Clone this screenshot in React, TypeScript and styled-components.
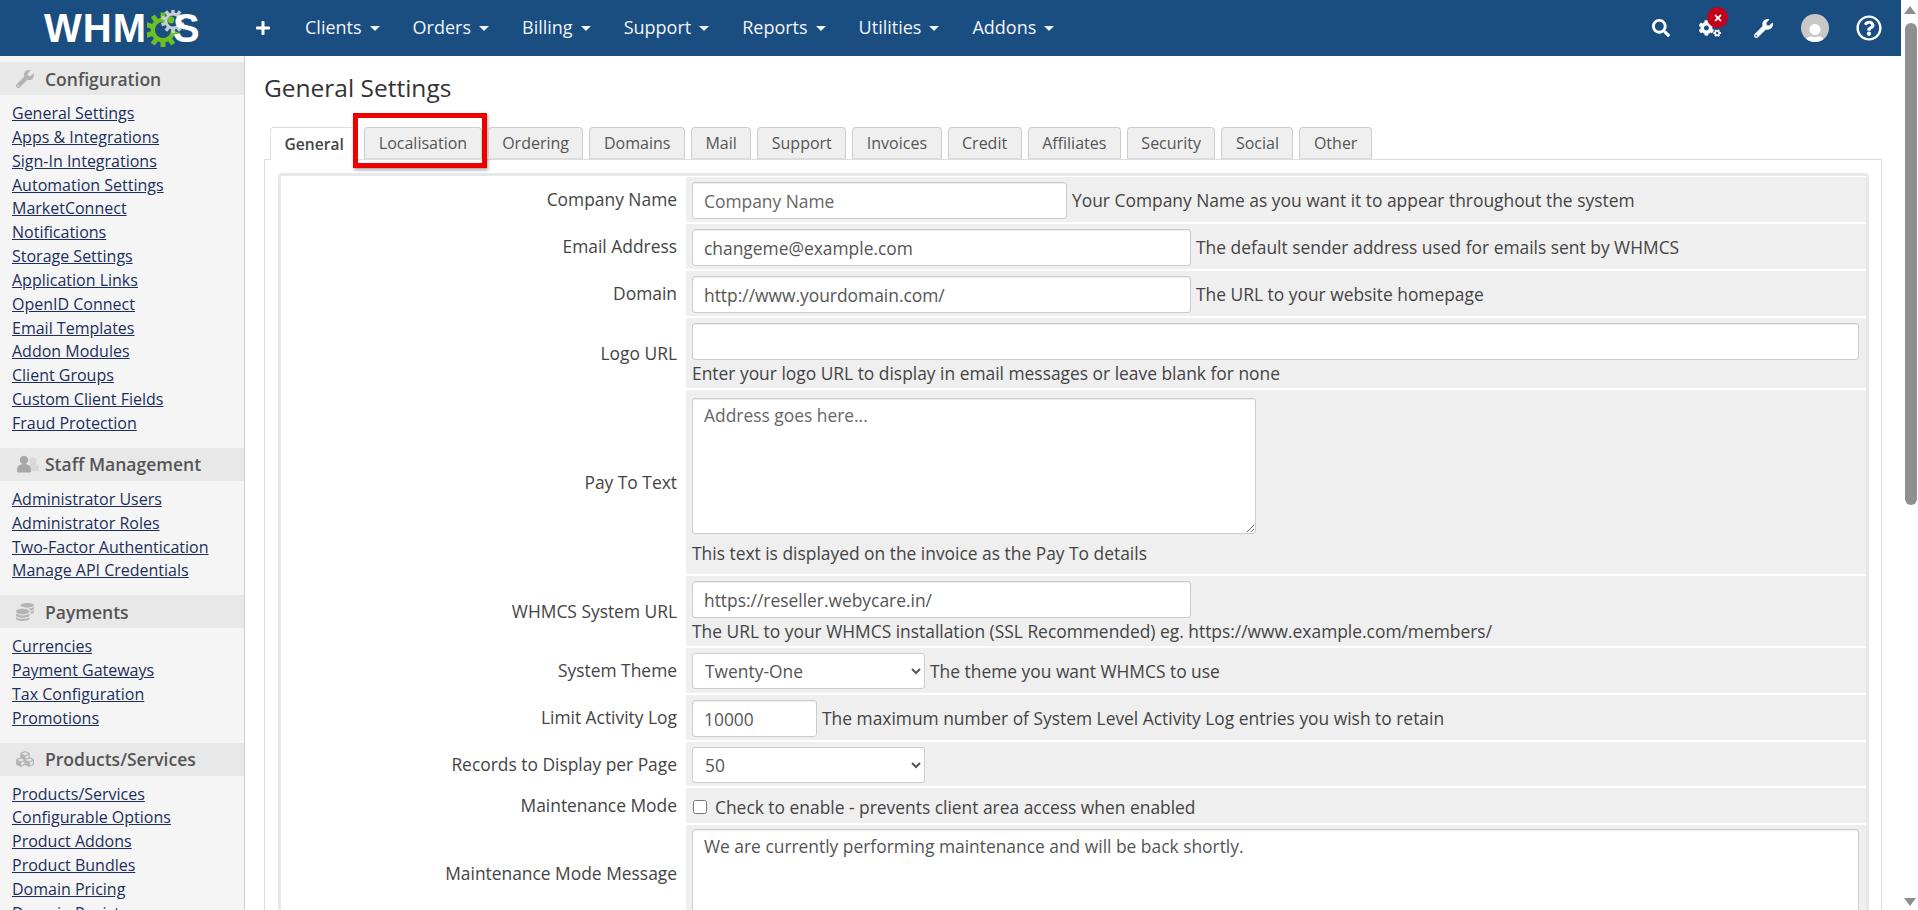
import React from 'react'
import styled, { createGlobalStyle } from 'styled-components'
import { FaSearch, FaCogs, FaWrench, FaTimes, FaRegQuestionCircle, FaCoins, FaCubes, FaPlus, FaUser } from 'react-icons/fa'

const GlobalStyle = createGlobalStyle`
  html, body {
    margin: 0;
    padding: 0;
    height: 100%;
    overflow: hidden;
    background: #fff;
  }
  body {
    font-family: "Open Sans", "Noto Sans", sans-serif;
    font-size: 16px;
    color: #333;
  }
  * {
    box-sizing: border-box;
  }
`

const Page = styled.div`
  display: flex;
  height: 910px;
  overflow: hidden;
`

const Content = styled.div`
  flex: 1;
  display: flex;
  flex-direction: column;
  min-width: 0;
`

const Nav = styled.nav`
  height: 56px;
  flex: none;
  display: flex;
  align-items: center;
  background: #1a4d80;
  color: #fff;
  padding-left: 44px;
`

const Logo = styled.div`
  display: flex;
  align-items: center;
  width: 156px;
  height: 56px;
  font-family: "Liberation Sans", sans-serif;
  font-weight: 700;
  font-size: 40px;
  letter-spacing: 1px;
  color: #fff;
`

const LogoGear = styled.svg`
  width: 37px;
  height: 37px;
  flex: none;
  margin: 0 -11px 0 0;
`

const NewButton = styled.a`
  display: flex;
  align-items: center;
  margin-left: 55px;
  margin-right: 34px;
  font-size: 16px;
  color: #fff;
`

const NavItem = styled.a`
  display: flex;
  align-items: center;
  margin-right: 33px;
  margin-top: -2px;
  font-size: 18px;
  color: #f1f4f8;

  &::after {
    content: '';
    margin-left: 8px;
    margin-top: 3px;
    border-top: 5px solid #f1f4f8;
    border-left: 5px solid transparent;
    border-right: 5px solid transparent;
  }
`

const NavIcons = styled.div`
  margin-left: auto;
  padding-right: 6px;
  display: flex;
  align-items: center;
`

const NavIcon = styled.a<{ $width: number }>`
  position: relative;
  display: flex;
  justify-content: center;
  align-items: center;
  width: ${({ $width }) => $width}px;
  height: 56px;
  color: #fff;
`

const AlertBadge = styled.span`
  position: absolute;
  top: 7px;
  left: 26px;
  width: 21px;
  height: 21px;
  border-radius: 50%;
  background: #c4001a;
  display: flex;
  align-items: center;
  justify-content: center;
  color: #fff;
  font-size: 10px;
`

const Avatar = styled.span`
  width: 28px;
  height: 28px;
  border-radius: 50%;
  overflow: hidden;
  background: #c8c8c8;
  display: flex;
  align-items: flex-end;
  justify-content: center;
  color: #fff;
  font-size: 22px;

  svg {
    margin-bottom: -4px;
  }
`

const Body = styled.div`
  flex: 1;
  display: flex;
  min-height: 0;
`

const Sidebar = styled.aside`
  width: 245px;
  flex: none;
  padding-top: 6px;
  background: #f5f5f5;
  border-right: 1px solid #ccc;
  overflow: hidden;
`

const SideSection = styled.section`
  margin-bottom: 12px;
`

const SideHeader = styled.h3`
  display: flex;
  align-items: center;
  height: 33px;
  margin: 0 0 7px;
  padding-left: 16px;
  background: #e8e8e8;
  color: #555;
  font-size: 17.5px;
  font-weight: 600;
`

const SideIcon = styled.span`
  width: 29px;
  flex: none;
  display: flex;
  align-items: center;
  color: #b4b4b4;
  font-size: 18px;
`

const SideLink = styled.a`
  display: block;
  height: 23.85px;
  line-height: 23.85px;
  padding-left: 12px;
  font-size: 16px;
  color: #1c2f5c;
  text-decoration: underline;
  white-space: nowrap;
`

const Main = styled.main`
  flex: 1;
  min-width: 0;
  padding: 0 19px 0 19px;
  overflow: hidden;
`

const Title = styled.h1`
  margin: 0;
  height: 71px;
  padding-top: 14px;
  font-size: 24.5px;
  line-height: 36px;
  font-weight: 400;
  color: #333;
`

const Tabs = styled.div`
  display: flex;
  gap: 6px;
  padding-left: 6px;
  height: 32px;
`

const Tab = styled.a<{ $active?: boolean }>`
  position: relative;
  display: flex;
  align-items: center;
  height: ${({ $active }) => ($active ? 33 : 32)}px;
  padding: 0 13.5px;
  font-size: ${({ $active }) => ($active ? 15.6 : 16)}px;
  color: ${({ $active }) => ($active ? '#444' : '#555')};
  font-weight: ${({ $active }) => ($active ? 600 : 400)};
  background: ${({ $active }) => ($active ? '#fff' : '#efefef')};
  border: 1px solid ${({ $active }) => ($active ? '#ddd' : '#ccc')};
  border-bottom: ${({ $active }) => ($active ? 'none' : '1px solid #ddd')};
  border-radius: 4px 4px 0 0;
  z-index: 1;
`

const Highlight = styled.span`
  position: absolute;
  top: -15px;
  bottom: -10px;
  left: -12px;
  right: -6px;
  border: 5px solid #ee0000;
  box-shadow: 1px 2px 3px rgba(0, 0, 0, 0.35);
  pointer-events: none;
  z-index: 2;
`

const Pane = styled.div`
  margin-top: 0;
  padding: 13px 12px 0 13px;
  border: 1px solid #ddd;
  border-bottom: none;
  height: 760px;
`

const FormBox = styled.div`
  display: flex;
  flex-direction: column;
  gap: 2px;
  border: 3px solid #e6e9ec;
  border-bottom: none;
  border-radius: 4px 4px 0 0;
  padding-top: 1px;
  height: 760px;
`

const Row = styled.div`
  display: grid;
  grid-template-columns: 405px 1fr;
  flex: none;
`

const Label = styled.label`
  display: flex;
  align-items: center;
  justify-content: flex-end;
  padding-right: 9px;
  padding-bottom: 1px;
  font-size: 17.4px;
  color: #444;
`

const Field = styled.div<{ $top?: number }>`
  display: flex;
  align-items: flex-start;
  flex-wrap: wrap;
  column-gap: 5px;
  padding: ${({ $top }) => $top ?? 5}px 7px 3px 6px;
  background: #efefef;
  font-size: 17.4px;
  color: #444;
`

const TextInput = styled.input<{ $width: string }>`
  width: ${({ $width }) => $width};
  height: 37px;
  padding: 0 11px;
  background: #fff;
  border: 1px solid #ccc;
  border-radius: 3px;
  box-shadow: inset 0 1px 1px rgba(0, 0, 0, 0.075);
  font: inherit;
  color: #555;
  outline: none;

  &::placeholder {
    color: #666;
    opacity: 1;
  }
`

const TextArea = styled.textarea<{ $width: string; $height: number }>`
  display: block;
  width: ${({ $width }) => $width};
  height: ${({ $height }) => $height}px;
  padding: 4px 11px;
  background: #fff;
  border: 1px solid #ccc;
  border-radius: 3px;
  box-shadow: inset 0 1px 1px rgba(0, 0, 0, 0.075);
  font: inherit;
  line-height: 1.43;
  color: #555;
  outline: none;

  &::placeholder {
    color: #666;
    opacity: 1;
  }
`

const SelectInput = styled.select`
  width: 233px;
  height: 36px;
  padding: 0 8px;
  background: #fff;
  border: 1px solid #ccc;
  border-radius: 3px;
  font: inherit;
  color: #555;
  outline: none;
`

const Hint = styled.span`
  line-height: 37px;
  white-space: nowrap;
`

const BlockHint = styled.div<{ $height: number }>`
  width: 100%;
  display: flex;
  align-items: center;
  height: ${({ $height }) => $height}px;
`

const CheckLabel = styled.label`
  display: flex;
  align-items: center;
  gap: 8px;
  height: 27px;
`

const Checkbox = styled.input`
  width: 14px;
  height: 14px;
  margin: 0 0 0 1px;
`

const Scrollbar = styled.div`
  position: relative;
  width: 17px;
  flex: none;
  display: flex;
  flex-direction: column;
  align-items: flex-end;
  background: #fff;
`

const ScrollArrow = styled.span<{ $down?: boolean }>`
  position: absolute;
  right: 2px;
  ${({ $down }) => ($down ? 'bottom: 4px;' : 'top: 6px;')}
  border-left: 6px solid transparent;
  border-right: 6px solid transparent;
  ${({ $down }) => ($down ? 'border-top' : 'border-bottom')}: 8px solid #8c8c8c;
`

const ScrollThumb = styled.span`
  width: 12px;
  height: 482px;
  margin: 23px 1px 0 0;
  border-radius: 6px;
  background: #8f8f8f;
`

const sideGroups = [
  {
    title: 'Configuration',
    icon: <FaWrench />,
    links: ['General Settings', 'Apps & Integrations', 'Sign-In Integrations', 'Automation Settings', 'MarketConnect', 'Notifications', 'Storage Settings', 'Application Links', 'OpenID Connect', 'Email Templates', 'Addon Modules', 'Client Groups', 'Custom Client Fields', 'Fraud Protection'],
  },
  {
    title: 'Staff Management',
    icon: (
      <svg width="24" height="18" viewBox="0 0 24 18">
        <circle cx="17" cy="6" r="3.6" fill="#d8d8d8" />
        <path d="M11 15c0-4 2-6 6-6s6 2 6 6c0 .8-.5 1-1 1H12c-.5 0-1-.2-1-1z" fill="#d8d8d8" />
        <circle cx="8" cy="5" r="4.2" fill="#a8a8a8" />
        <path d="M1 16c0-5 2.500-7 7-7s7 2 7 7c0 1-.6 1.500-1.200 1.500H2.200C1.600 17.500 1 17 1 16z" fill="#a8a8a8" />
      </svg>
    ),
    links: ['Administrator Users', 'Administrator Roles', 'Two-Factor Authentication', 'Manage API Credentials'],
  },
  {
    title: 'Payments',
    icon: <FaCoins />,
    links: ['Currencies', 'Payment Gateways', 'Tax Configuration', 'Promotions'],
  },
  {
    title: 'Products/Services',
    icon: <FaCubes />,
    links: ['Products/Services', 'Configurable Options', 'Product Addons', 'Product Bundles', 'Domain Pricing', 'Domain Registrars'],
  },
]

const navItems = ['Clients', 'Orders', 'Billing', 'Support', 'Reports', 'Utilities', 'Addons']
const tabs = ['General', 'Localisation', 'Ordering', 'Domains', 'Mail', 'Support', 'Invoices', 'Credit', 'Affiliates', 'Security', 'Social', 'Other']

function Gear({ cx, cy, r, teeth, color, hole, holeColor }: { cx: number; cy: number; r: number; teeth: number; color: string; hole: number; holeColor: string }) {
  const spokes = Array.from({ length: teeth }, (_, i) => (i * 360) / teeth)
  return (
    <g>
      {spokes.map((deg) => (
        <rect key={deg} x={cx - r * 0.17} y={cy - r * 1.2} width={r * 0.34} height={r * 0.5} fill={color} transform={`rotate(${deg} ${cx} ${cy})`} />
      ))}
      <circle cx={cx} cy={cy} r={r * 0.85} fill={color} />
      <circle cx={cx} cy={cy} r={hole} fill={holeColor} />
    </g>
  )
}

export default function App() {
  return (
    <Page>
      <GlobalStyle />
      <Content>
        <Nav>
          <Logo>
            <span>WHM</span>
            <LogoGear viewBox="0 0 37 37">
              <Gear cx={16} cy={20} r={14.5} teeth={10} color="#6cc024" hole={8} holeColor="#1a4d80" />
              <Gear cx={26} cy={11} r={10} teeth={10} color="#c9cdd0" hole={5.5} holeColor="#1a4d80" />
              <circle cx="24" cy="10" r="3.4" fill="#6cc024" />
            </LogoGear>
            <span>S</span>
          </Logo>
          <NewButton>
            <FaPlus />
          </NewButton>
          {navItems.map((item) => (
            <NavItem key={item}>{item}</NavItem>
          ))}
          <NavIcons>
            <NavIcon $width={40}>
              <FaSearch size={18} />
            </NavIcon>
            <NavIcon $width={58}>
              <FaCogs size={22} />
              <AlertBadge>
                <FaTimes />
              </AlertBadge>
            </NavIcon>
            <NavIcon $width={48}>
              <FaWrench size={19} />
            </NavIcon>
            <NavIcon $width={56}>
              <Avatar>
                <FaUser />
              </Avatar>
            </NavIcon>
            <NavIcon $width={52}>
              <FaRegQuestionCircle size={26} />
            </NavIcon>
          </NavIcons>
        </Nav>
        <Body>
          <Sidebar>
            {sideGroups.map((group) => (
              <SideSection key={group.title}>
                <SideHeader>
                  <SideIcon>{group.icon}</SideIcon>
                  {group.title}
                </SideHeader>
                {group.links.map((link) => (
                  <SideLink key={link}>{link}</SideLink>
                ))}
              </SideSection>
            ))}
          </Sidebar>
          <Main>
            <Title>General Settings</Title>
            <Tabs>
              {tabs.map((tab, i) => (
                <Tab key={tab} $active={i === 0}>
                  {tab}
                  {tab === 'Localisation' && <Highlight />}
                </Tab>
              ))}
            </Tabs>
            <Pane>
              <FormBox>
                <Row>
                  <Label>Company Name</Label>
                  <Field>
                    <TextInput $width="375px" placeholder="Company Name" />
                    <Hint>Your Company Name as you want it to appear throughout the system</Hint>
                  </Field>
                </Row>
                <Row>
                  <Label>Email Address</Label>
                  <Field>
                    <TextInput $width="499px" defaultValue="changeme@example.com" />
                    <Hint>The default sender address used for emails sent by WHMCS</Hint>
                  </Field>
                </Row>
                <Row>
                  <Label>Domain</Label>
                  <Field>
                    <TextInput $width="499px" defaultValue="http://www.yourdomain.com/" />
                    <Hint>The URL to your website homepage</Hint>
                  </Field>
                </Row>
                <Row>
                  <Label>Logo URL</Label>
                  <Field>
                    <TextInput $width="100%" />
                    <BlockHint $height={25}>Enter your logo URL to display in email messages or leave blank for none</BlockHint>
                  </Field>
                </Row>
                <Row>
                  <Label>Pay To Text</Label>
                  <Field $top={8}>
                    <TextArea $width="564px" $height={136} placeholder="Address goes here..." />
                    <BlockHint $height={37}>This text is displayed on the invoice as the Pay To details</BlockHint>
                  </Field>
                </Row>
                <Row>
                  <Label>WHMCS System URL</Label>
                  <Field>
                    <TextInput $width="499px" defaultValue="https://reseller.webycare.in/" />
                    <BlockHint $height={25}>The URL to your WHMCS installation (SSL Recommended) eg. https://www.example.com/members/</BlockHint>
                  </Field>
                </Row>
                <Row>
                  <Label>System Theme</Label>
                  <Field>
                    <SelectInput defaultValue="Twenty-One">
                      <option>Twenty-One</option>
                    </SelectInput>
                    <Hint>The theme you want WHMCS to use</Hint>
                  </Field>
                </Row>
                <Row>
                  <Label>Limit Activity Log</Label>
                  <Field>
                    <TextInput $width="125px" defaultValue="10000" />
                    <Hint>The maximum number of System Level Activity Log entries you wish to retain</Hint>
                  </Field>
                </Row>
                <Row>
                  <Label>Records to Display per Page</Label>
                  <Field>
                    <SelectInput defaultValue="50">
                      <option>50</option>
                    </SelectInput>
                  </Field>
                </Row>
                <Row>
                  <Label>Maintenance Mode</Label>
                  <Field>
                    <CheckLabel>
                      <Checkbox type="checkbox" />
                      Check to enable - prevents client area access when enabled
                    </CheckLabel>
                  </Field>
                </Row>
                <Row>
                  <Label>Maintenance Mode Message</Label>
                  <Field $top={4}>
                    <TextArea $width="100%" $height={90} defaultValue="We are currently performing maintenance and will be back shortly." />
                  </Field>
                </Row>
              </FormBox>
            </Pane>
          </Main>
        </Body>
      </Content>
      <Scrollbar>
        <ScrollArrow />
        <ScrollThumb />
        <ScrollArrow $down />
      </Scrollbar>
    </Page>
  )
}
